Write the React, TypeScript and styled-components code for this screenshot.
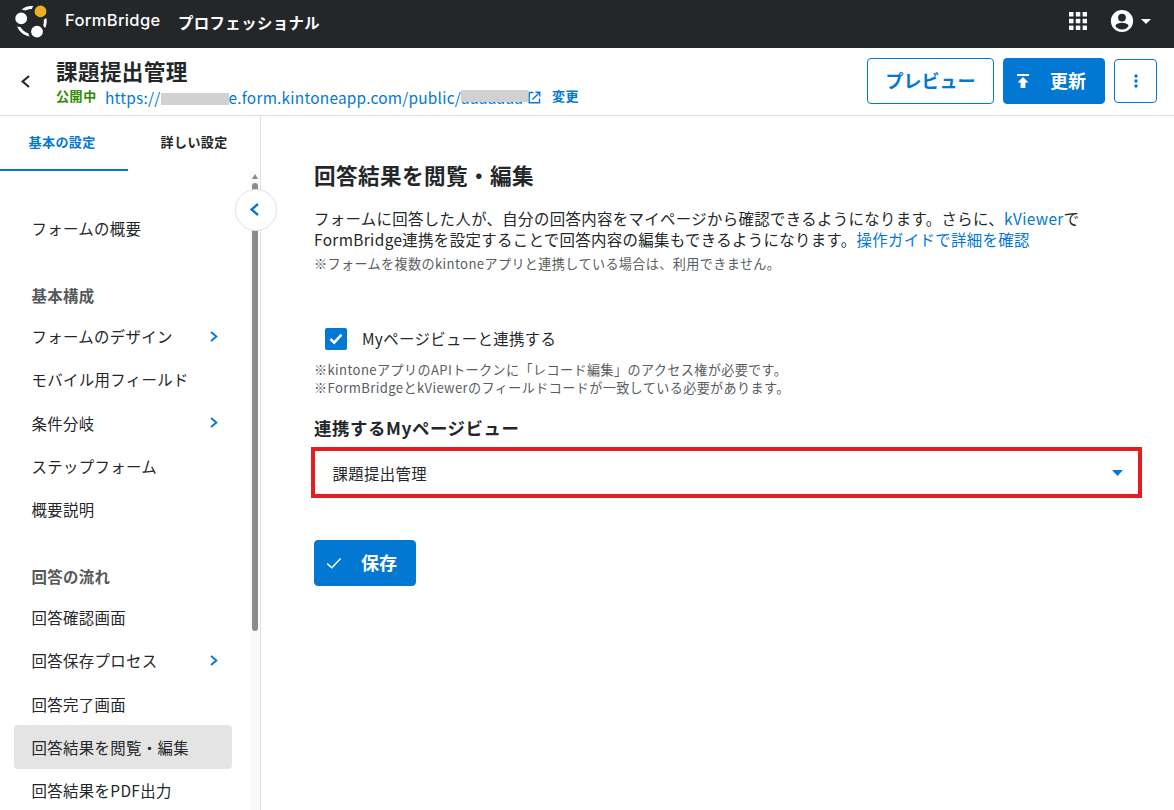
import React from "react";
import styled, { createGlobalStyle, css } from "styled-components";

const blue = "#0278d3";
const ink = "#242729";

const Global = createGlobalStyle`
  * { box-sizing: border-box; }
  html, body { margin: 0; height: 100%; overflow: hidden; background: #fff; }
  body {
    font-family: "Noto Sans CJK JP", "Noto Sans", sans-serif;
    font-size: 15.4px;
    letter-spacing: 0.37px;
    color: ${ink};
  }
  svg { display: block; flex: none; }
`;

const Page = styled.div`
  width: 1174px;
  height: 810px;
  display: flex;
  flex-direction: column;
  overflow: hidden;
`;

const TopBar = styled.header`
  height: 48px;
  flex: none;
  display: flex;
  align-items: center;
  background: #242729;
  color: #fff;
  padding: 0 23px 6px 14px;
`;

const Brand = styled.span`
  font-family: Inter, sans-serif;
  font-weight: 500;
  font-size: 16.5px;
  line-height: 24px;
  letter-spacing: 0.35px;
  width: 113px;
  margin-left: 17px;
  padding-bottom: 2px;
  white-space: nowrap;
`;

const Plan = styled.span`
  font-weight: 700;
  font-size: 15.4px;
  line-height: 24px;
  letter-spacing: 0.4px;
  padding-top: 2px;
  flex: 1;
`;

const TopIcons = styled.div`
  display: flex;
  align-items: center;
  svg + svg { margin-left: 22px; }
  svg:last-child { margin-left: 6px; }
`;

const FormBar = styled.div`
  height: 68px;
  flex: none;
  display: flex;
  border-bottom: 1px solid #dfe1e1;
  padding: 0 17px 0 21px;
`;

const Back = styled.button`
  border: 0;
  background: none;
  padding: 27px 0 0;
  width: 35px;
  display: flex;
  align-items: flex-start;
`;

const FormInfo = styled.div`
  flex: 1;
  padding-top: 8px;
`;

const FormName = styled.h1`
  margin: 0 0 1px;
  font-size: 21.6px;
  line-height: 30px;
  font-weight: 700;
  letter-spacing: 0.35px;
`;

const UrlLine = styled.div`
  display: flex;
  align-items: center;
  height: 18px;
  white-space: nowrap;
`;

const Status = styled.span`
  color: #2b8a00;
  font-weight: 700;
  font-size: 13px;
  line-height: 18px;
  letter-spacing: 0.6px;
  width: 49px;
`;

const Url = styled.a`
  color: ${blue};
  display: flex;
  align-items: center;
  line-height: 18px;
  letter-spacing: 0.23px;
  margin-top: 2px;
`;

const Masked = styled.span<{ $w: number; $top: number }>`
  position: relative;
  display: block;
  width: ${(p) => p.$w}px;
  height: 18px;
  &::after {
    content: "";
    position: absolute;
    left: 0;
    right: 0;
    top: ${(p) => p.$top}px;
    height: 12px;
    background: #d0d1d2;
  }
`;

const Change = styled.a`
  color: ${blue};
  font-weight: 700;
  font-size: 13px;
  line-height: 18px;
  letter-spacing: 0.6px;
  margin-left: 11px;
`;

const Actions = styled.div`
  display: flex;
  align-items: flex-start;
  gap: 9px;
  padding-top: 10px;
`;

const Button = styled.button<{ $w: number; $h?: number; $primary?: boolean }>`
  width: ${(p) => p.$w}px;
  height: ${(p) => p.$h ?? 46}px;
  border: 1px solid ${blue};
  border-radius: 4px;
  background: ${(p) => (p.$primary ? blue : "#fff")};
  color: ${(p) => (p.$primary ? "#fff" : blue)};
  font: 700 18px/26px "Noto Sans CJK JP", sans-serif;
  letter-spacing: 0;
  padding: 0;
  display: flex;
  align-items: center;
  justify-content: ${(p) => (p.$primary ? "flex-start" : "center")};
  ${(p) => p.$primary && css`padding-left: 10px; gap: 18px;`}
`;

const ButtonLabel = styled.span`
  padding-bottom: 2px;
`;

const MoreSlot = styled.div`
  padding-top: 1px;
`;

const Body = styled.div`
  flex: 1;
  display: flex;
  min-height: 0;
`;

const Sidebar = styled.aside`
  position: relative;
  width: 261px;
  flex: none;
  border-right: 1px solid #dfe1e1;
  display: flex;
  flex-direction: column;
`;

const Tabs = styled.div`
  display: flex;
  height: 55px;
  flex: none;
`;

const Tab = styled.div<{ $active?: boolean }>`
  width: ${(p) => (p.$active ? 128 : 132)}px;
  padding-left: ${(p) => (p.$active ? 28.5 : 32.5)}px;
  border-bottom: 2px solid ${(p) => (p.$active ? blue : "transparent")};
  color: ${(p) => (p.$active ? blue : ink)};
  font-size: 13px;
  font-weight: 700;
  letter-spacing: 0.45px;
  line-height: 52px;
  white-space: nowrap;
`;

const MenuArea = styled.div`
  display: flex;
  flex: 1;
  min-height: 0;
`;

const Menu = styled.nav`
  width: 250px;
  padding: 35.5px 18px 0 14px;
  overflow: hidden;
`;

const Group = styled.div`
  margin-bottom: 26px;
`;

const GroupTitle = styled.div`
  height: 38.75px;
  line-height: 39px;
  padding-left: 17.5px;
  font-weight: 700;
  color: #54585a;
`;

const Item = styled.div<{ $active?: boolean }>`
  height: 43.25px;
  padding: 0 14px 0 17.5px;
  border-radius: 4px;
  background: ${(p) => (p.$active ? "#e4e4e4" : "transparent")};
  display: flex;
  align-items: center;
  justify-content: space-between;
  white-space: nowrap;
`;

const Scroll = styled.div`
  width: 10px;
  background: #fafafa;
  display: flex;
  flex-direction: column;
  align-items: center;
  padding-top: 3px;
`;

const Thumb = styled.div`
  width: 6px;
  height: 448px;
  margin-top: 4px;
  border-radius: 3px;
  background: #8b8b8b;
`;

const Collapse = styled.button`
  position: absolute;
  left: 235px;
  top: 73px;
  width: 42px;
  height: 42px;
  border-radius: 50%;
  border: 1px solid #dfe1e1;
  background: #fff;
  padding: 0 3px 2px 0;
  display: flex;
  align-items: center;
  justify-content: center;
`;

const Main = styled.main`
  flex: 1;
  padding: 42px 32px 0 53px;
`;

const Title = styled.h2`
  margin: 0;
  font-size: 21.6px;
  line-height: 34px;
  font-weight: 700;
  letter-spacing: 0.4px;
`;

const Text = styled.p`
  margin: 16px 0 0;
  line-height: 21px;
  white-space: nowrap;
`;

const Link = styled.a`
  color: ${blue};
`;

const Note = styled.p<{ $top: number }>`
  margin: ${(p) => p.$top}px 0 0;
  font-size: 13.1px;
  line-height: 18px;
  letter-spacing: 0.39px;
  color: #595d5f;
`;

const CheckRow = styled.label`
  display: flex;
  align-items: center;
  gap: 15px;
  height: 24px;
  margin: 54px 0 0 11px;
`;

const CheckLabel = styled.span`
  padding-bottom: 2px;
`;

const CheckBox = styled.span`
  width: 22px;
  height: 22px;
  border-radius: 2px;
  background: ${blue};
  display: flex;
  align-items: center;
  justify-content: center;
`;

const FieldLabel = styled.h3`
  margin: 18px 0 0;
  font-size: 17.4px;
  line-height: 26px;
  font-weight: 700;
  letter-spacing: 0.6px;
`;

const Select = styled.div`
  width: 831px;
  height: 51px;
  margin: 6px 0 42px -3.5px;
  border: 4px solid #e71c1f;
  display: flex;
  align-items: center;
  justify-content: space-between;
  padding: 0 15px 0 18px;
`;

const Chevron = ({ left, size, color, w }: { left?: boolean; size: [number, number]; color: string; w: number }) => (
  <svg width={size[0]} height={size[1]} viewBox={`0 0 ${size[0]} ${size[1]}`} fill="none" stroke={color} strokeWidth={w}>
    <path
      d={
        left
          ? `M${size[0] - 1} 1 L1.6 ${size[1] / 2} L${size[0] - 1} ${size[1] - 1}`
          : `M1 1 L${size[0] - 1.6} ${size[1] / 2} L1 ${size[1] - 1}`
      }
    />
  </svg>
);

const Caret = ({ color, w, h }: { color: string; w: number; h: number }) => (
  <svg width={w} height={h} viewBox={`0 0 ${w} ${h}`}>
    <path d={`M0 0H${w}L${w / 2} ${h}Z`} fill={color} />
  </svg>
);

type Entry = { label: string; more?: boolean; active?: boolean };
const groups: { title?: string; items: Entry[] }[] = [
  { items: [{ label: "フォームの概要" }] },
  {
    title: "基本構成",
    items: [
      { label: "フォームのデザイン", more: true },
      { label: "モバイル用フィールド" },
      { label: "条件分岐", more: true },
      { label: "ステップフォーム" },
      { label: "概要説明" },
    ],
  },
  {
    title: "回答の流れ",
    items: [
      { label: "回答確認画面" },
      { label: "回答保存プロセス", more: true },
      { label: "回答完了画面" },
      { label: "回答結果を閲覧・編集", active: true },
      { label: "回答結果をPDF出力" },
    ],
  },
];

export default function App() {
  return (
    <Page>
      <Global />
      <TopBar>
        <svg width="34" height="36" viewBox="14 3 34 36">
          <circle cx="31.5" cy="21.3" r="13.8" fill="none" stroke="#fff" strokeWidth="2.8" />
          <g stroke="#242729" strokeWidth="3">
            <circle cx="21.2" cy="18.4" r="7.4" fill="#fff" />
            <circle cx="40.5" cy="11.4" r="7.4" fill="#ebb022" />
            <circle cx="37" cy="31.7" r="7.4" fill="#fff" />
          </g>
        </svg>
        <Brand>FormBridge</Brand>
        <Plan>プロフェッショナル</Plan>
        <TopIcons>
          <svg width="18" height="18" viewBox="0 0 18 18" fill="#fff">
            {[0, 6.8, 13.6].map((y) => [0, 6.8, 13.6].map((x) => <rect key={`${x}-${y}`} x={x} y={y} width="4.5" height="4.5" />))}
          </svg>
          <svg width="26" height="26" viewBox="1 1 22 22" fill="#fff">
            <path d="M12 2.6a9.4 9.4 0 1 0 0 18.8 9.4 9.4 0 0 0 0-18.8Zm0 3.2a3.3 3.3 0 1 1 0 6.6 3.3 3.3 0 0 1 0-6.6Zm0 13.4c-2.4 0-4.4-1.2-5.6-3 .1-1.9 3.8-2.8 5.6-2.8s5.5.9 5.6 2.8a6.7 6.7 0 0 1-5.6 3Z" />
          </svg>
          <Caret color="#fff" w={10} h={5} />
        </TopIcons>
      </TopBar>

      <FormBar>
        <Back>
          <Chevron left size={[9, 13]} color={ink} w={2.2} />
        </Back>
        <FormInfo>
          <FormName>課題提出管理</FormName>
          <UrlLine>
            <Status>公開中</Status>
            <Url>
              https://
              <Masked $w={68} $top={5} />
              e.form.kintoneapp.com/public/
              <Masked $w={67} $top={2}>aaaaaaa</Masked>
              <svg width="13" height="13" viewBox="0 0 13 13" fill="none" stroke={blue} strokeWidth="1.4">
                <path d="M5.5 1.5H1.2V11.8H11.5V7.5M7.5 1.2H11.8V5.5M11.6 1.4L4.4 8.6" />
              </svg>
            </Url>
            <Change>変更</Change>
          </UrlLine>
        </FormInfo>
        <Actions>
          <Button $w={127}>
            <ButtonLabel>プレビュー</ButtonLabel>
          </Button>
          <Button $w={102} $primary>
            <svg width="18" height="18" viewBox="0 0 18 18" fill="#fff">
              <path d="M3 2H15V4H3ZM9 5L14.5 10.5H11.4V16H6.6V10.5H3.5Z" />
            </svg>
            <ButtonLabel>更新</ButtonLabel>
          </Button>
          <MoreSlot>
            <Button $w={43} $h={44}>
              <svg width="4" height="14" viewBox="0 0 4 14" fill={blue}>
                <circle cx="2" cy="2" r="1.7" />
                <circle cx="2" cy="7" r="1.7" />
                <circle cx="2" cy="12" r="1.7" />
              </svg>
            </Button>
          </MoreSlot>
        </Actions>
      </FormBar>

      <Body>
        <Sidebar>
          <Tabs>
            <Tab $active>基本の設定</Tab>
            <Tab>詳しい設定</Tab>
          </Tabs>
          <MenuArea>
            <Menu>
              {groups.map((g, i) => (
                <Group key={i}>
                  {g.title && <GroupTitle>{g.title}</GroupTitle>}
                  {g.items.map((it) => (
                    <Item key={it.label} $active={it.active}>
                      {it.label}
                      {it.more && <Chevron size={[8, 11]} color={blue} w={1.9} />}
                    </Item>
                  ))}
                </Group>
              ))}
            </Menu>
            <Scroll>
              <svg width="6" height="5" viewBox="0 0 6 5">
                <path d="M3 0L6 5H0Z" fill="#8b8b8b" />
              </svg>
              <Thumb />
            </Scroll>
          </MenuArea>
          <Collapse>
            <Chevron left size={[9, 13]} color={blue} w={2.4} />
          </Collapse>
        </Sidebar>

        <Main>
          <Title>回答結果を閲覧・編集</Title>
          <Text>
            フォームに回答した人が、自分の回答内容をマイページから確認できるようになります。さらに、<Link>kViewer</Link>で
            <br />
            FormBridge連携を設定することで回答内容の編集もできるようになります。<Link>操作ガイドで詳細を確認</Link>
          </Text>
          <Note $top={5}>※フォームを複数のkintoneアプリと連携している場合は、利用できません。</Note>
          <CheckRow>
            <CheckBox>
              <svg width="14" height="12" viewBox="0 0 14 12" fill="none" stroke="#fff" strokeWidth="2.6">
                <path d="M1.5 6L5.2 9.6L12.5 1.6" />
              </svg>
            </CheckBox>
            <CheckLabel>Myページビューと連携する</CheckLabel>
          </CheckRow>
          <Note $top={10}>
            ※kintoneアプリのAPIトークンに「レコード編集」のアクセス権が必要です。
            <br />
            ※FormBridgeとkViewerのフィールドコードが一致している必要があります。
          </Note>
          <FieldLabel>連携するMyページビュー</FieldLabel>
          <Select>
            課題提出管理
            <Caret color={blue} w={11} h={6} />
          </Select>
          <Button $w={102} $primary>
            <svg width="18" height="18" viewBox="0 0 18 18" fill="none" stroke="#fff" strokeWidth="1.5">
              <path d="M2.2 9.6L6.8 13.8L15.6 4.6" />
            </svg>
            <ButtonLabel>保存</ButtonLabel>
          </Button>
        </Main>
      </Body>
    </Page>
  );
}
